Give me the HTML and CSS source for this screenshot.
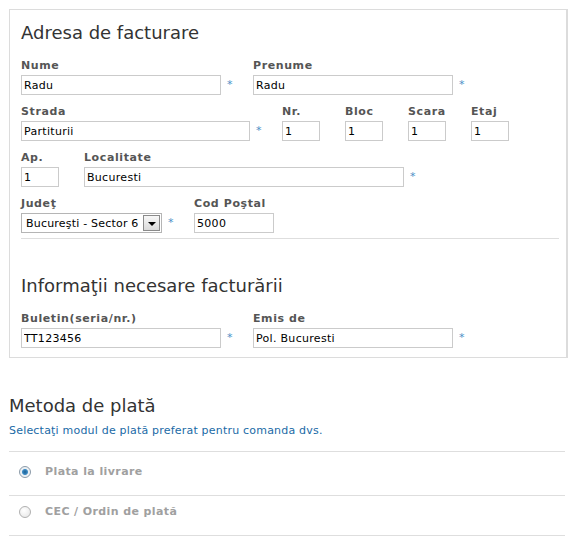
FILE: index.html
```html
<!DOCTYPE html>
<html lang="ro">
<head>
  <meta charset="UTF-8" />
  <title>Date de facturare</title>
  <link rel="stylesheet" href="styles.css">
</head>
<body>
  <div class="box">
    <h2 class="title">Adresa de facturare</h2>

    <div class="row">
      <div class="field">
        <label>Nume</label>
        <div class="control"><input class="w200" value="Radu"><span class="req">*</span></div>
      </div>
      <div class="field">
        <label>Prenume</label>
        <div class="control"><input class="w200" value="Radu"><span class="req">*</span></div>
      </div>
    </div>

    <div class="row">
      <div class="field">
        <label>Strada</label>
        <div class="control"><input class="w229" value="Partiturii"><span class="req">*</span></div>
      </div>
      <div class="field">
        <label>Nr.</label>
        <div class="control"><input class="w38" value="1"></div>
      </div>
      <div class="field">
        <label>Bloc</label>
        <div class="control"><input class="w38" value="1"></div>
      </div>
      <div class="field">
        <label>Scara</label>
        <div class="control"><input class="w38" value="1"></div>
      </div>
      <div class="field">
        <label>Etaj</label>
        <div class="control"><input class="w38" value="1"></div>
      </div>
    </div>

    <div class="row">
      <div class="field">
        <label>Ap.</label>
        <div class="control"><input class="w38" value="1"></div>
      </div>
      <div class="field">
        <label>Localitate</label>
        <div class="control"><input class="w320" value="Bucuresti"><span class="req">*</span></div>
      </div>
    </div>

    <div class="row">
      <div class="field">
        <label>Judeţ</label>
        <div class="control">
          <div class="select">
            <select>
              <option>Bucureşti - Sector 6</option>
            </select>
            <span class="arrow"></span>
          </div>
          <span class="req">*</span>
        </div>
      </div>
      <div class="field">
        <label>Cod Poştal</label>
        <div class="control"><input class="w80" value="5000"></div>
      </div>
    </div>

    <div class="sep"></div>

    <h2 class="title second">Informaţii necesare facturării</h2>

    <div class="row">
      <div class="field">
        <label>Buletin(seria/nr.)</label>
        <div class="control"><input class="w200" value="TT123456"><span class="req">*</span></div>
      </div>
      <div class="field">
        <label>Emis de</label>
        <div class="control"><input class="w200" value="Pol. Bucuresti"><span class="req">*</span></div>
      </div>
    </div>
  </div>

  <div class="payment">
    <h2 class="pay-title">Metoda de plată</h2>
    <p class="hint">Selectaţi modul de plată preferat pentru comanda dvs.</p>
    <ul class="methods">
      <li><input type="radio" name="pay" checked><span>Plata la livrare</span></li>
      <li><input type="radio" name="pay"><span>CEC / Ordin de plată</span></li>
    </ul>
  </div>
</body>
</html>
```

FILE: styles.css
```css
body {
  margin: 9px;
  font-family: "DejaVu Sans", Verdana, sans-serif;
  font-size: 11px;
  color: #333;
  background: #fff;
}
.box {
  width: 559px;
  box-sizing: border-box;
  border: 1px solid #dcdcdc;
  border-right: 2px solid #dcdcdc;
  padding: 11px 7px 9px 11px;
}
.title {
  margin: 0 0 14px;
  font-size: 18px;
  line-height: 24px;
  font-weight: normal;
  color: #333;
}
.title.second {
  margin-top: 35px;
}
.row {
  display: flex;
  gap: 25px;
}
.row + .row {
  margin-top: 10px;
}
.field {
  display: flex;
  flex-direction: column;
}
.field label {
  font-weight: bold;
  color: #555;
  line-height: 14px;
  letter-spacing: 0.6px;
  margin-bottom: 2px;
}
.control {
  display: flex;
  align-items: center;
}
.control input {
  box-sizing: border-box;
  height: 20px;
  border: 1px solid #cbcbcb;
  padding: 0 2px;
  font-family: inherit;
  font-size: 11px;
  letter-spacing: 0.3px;
  color: #000;
}
.w38 { width: 38px; }
.w80 { width: 80px; }
.w200 { width: 200px; }
.w229 { width: 229px; }
.w320 { width: 320px; }
.req {
  color: #4a8fc6;
  line-height: 14px;
  margin: 0 -5px 0 6px;
  width: 6px;
}
.select {
  display: flex;
  align-items: center;
  box-sizing: border-box;
  width: 141px;
  height: 20px;
  border: 1px solid #b5b5b5;
  padding-right: 1px;
}
.select select {
  flex: 1;
  min-width: 0;
  appearance: none;
  border: 0;
  background: transparent;
  padding: 0 0 0 4px;
  font-family: inherit;
  font-size: 11px;
  letter-spacing: 0.2px;
  color: #000;
}
.arrow {
  display: flex;
  align-items: center;
  justify-content: center;
  box-sizing: border-box;
  width: 17px;
  height: 16px;
  border: 1px solid #8a8a8a;
  background: linear-gradient(#f7f7f7, #dadada);
}
.arrow::after {
  content: "";
  border-left: 4px solid transparent;
  border-right: 4px solid transparent;
  border-top: 4px solid #000;
  margin-top: 2px;
}
.sep {
  height: 1px;
  background: #dedede;
  margin-top: 5px;
}
.payment {
  width: 556px;
  margin-top: 37px;
}
.pay-title {
  margin: 0;
  font-size: 18px;
  line-height: 22px;
  font-weight: normal;
  color: #333;
}
.hint {
  margin: 7px 0 0;
  padding-bottom: 13px;
  line-height: 14px;
  letter-spacing: 0.2px;
  color: #1a6aa6;
  border-bottom: 1px solid #dedede;
}
.methods {
  list-style: none;
  margin: 4px 0 0;
  padding: 0;
}
.methods li {
  display: flex;
  align-items: center;
  padding: 9px 0 16px 10px;
  line-height: 14px;
  border-bottom: 1px solid #dedede;
  font-weight: bold;
  letter-spacing: 0.4px;
  color: #a0a0a0;
}
.methods input {
  appearance: none;
  box-sizing: border-box;
  width: 12px;
  height: 12px;
  margin: 0 14px 0 0;
  border: 1px solid #b0b0b0;
  border-radius: 50%;
  background: radial-gradient(circle at 40% 35%, #fff, #e4e4e4);
}
.methods input:checked {
  border-color: #8b9aa8;
  background: radial-gradient(circle, #1d5f91 0, #3b8ac4 2.5px, #e9eef2 3.5px, #f4f6f8 6px);
}
```
